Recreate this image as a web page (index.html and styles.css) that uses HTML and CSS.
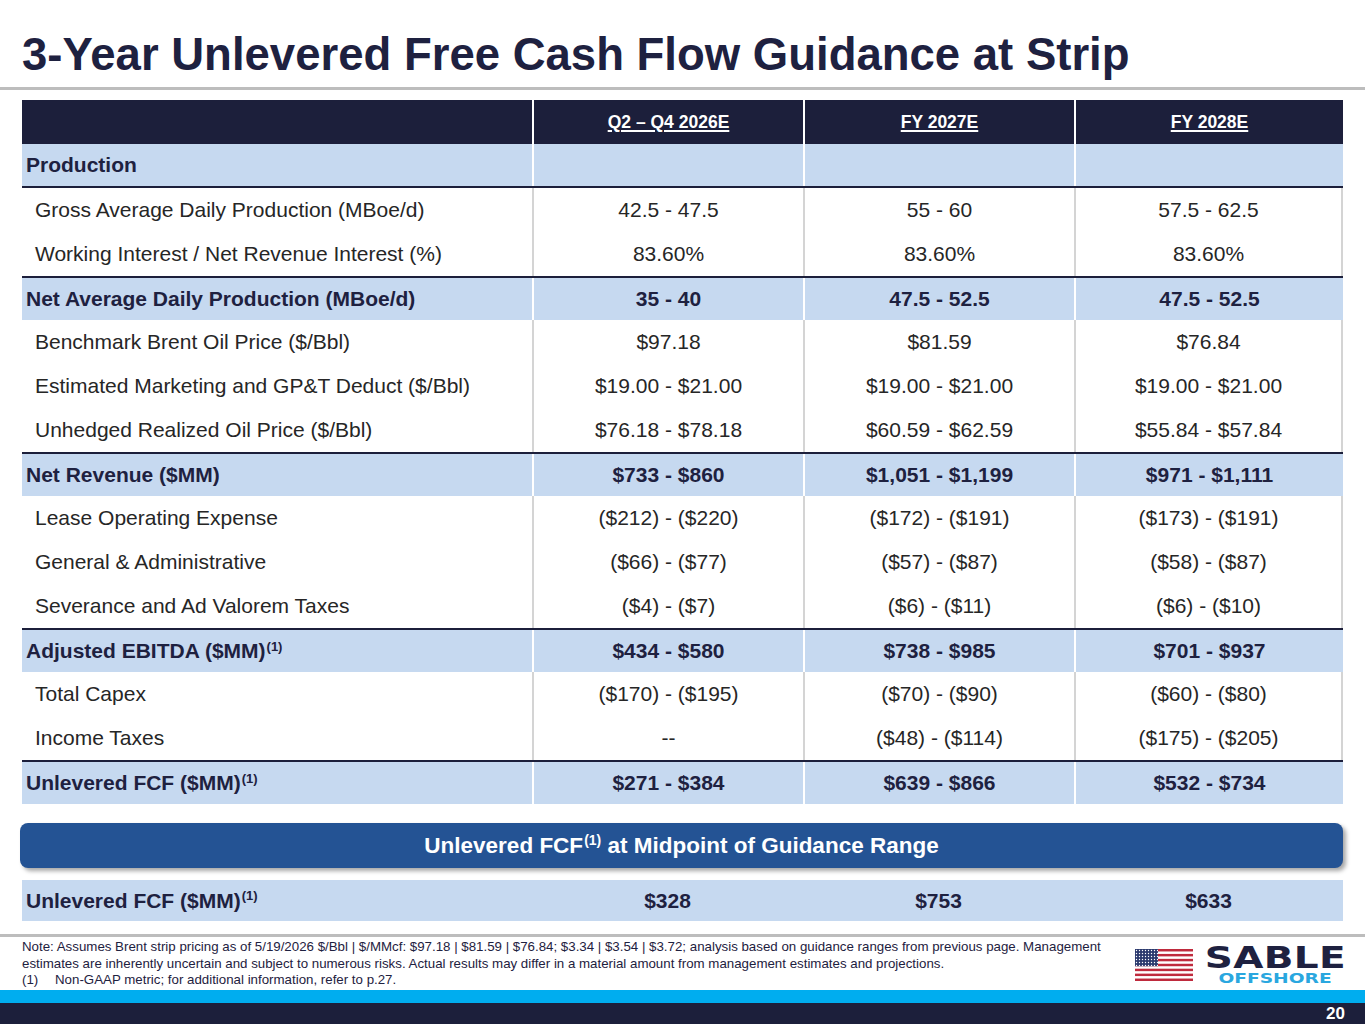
FILE: index.html
```html
<!DOCTYPE html>
<html lang="en">
<head>
<meta charset="utf-8">
<title>3-Year Unlevered Free Cash Flow Guidance at Strip</title>
<link rel="stylesheet" href="styles.css">
</head>
<body>
<div class="slide">
  <h1 class="title">3-Year Unlevered Free Cash Flow Guidance at Strip</h1>
  <div class="rule top-rule"></div>

  <div class="table">
    <div class="row head">
      <div class="cell label"></div>
      <div class="cell"><u>Q2 – Q4 2026E</u></div>
      <div class="cell"><u>FY 2027E</u></div>
      <div class="cell"><u>FY 2028E</u></div>
    </div>
    <div class="row blue bold endline">
      <div class="cell label">Production</div>
      <div class="cell"></div><div class="cell"></div><div class="cell"></div>
    </div>
    <div class="row white">
      <div class="cell label">Gross Average Daily Production (MBoe/d)</div>
      <div class="cell">42.5 - 47.5</div><div class="cell">55 - 60</div><div class="cell">57.5 - 62.5</div>
    </div>
    <div class="row white">
      <div class="cell label">Working Interest / Net Revenue Interest (%)</div>
      <div class="cell">83.60%</div><div class="cell">83.60%</div><div class="cell">83.60%</div>
    </div>
    <div class="row blue bold startline">
      <div class="cell label">Net Average Daily Production (MBoe/d)</div>
      <div class="cell">35 - 40</div><div class="cell">47.5 - 52.5</div><div class="cell">47.5 - 52.5</div>
    </div>
    <div class="row white">
      <div class="cell label">Benchmark Brent Oil Price ($/Bbl)</div>
      <div class="cell">$97.18</div><div class="cell">$81.59</div><div class="cell">$76.84</div>
    </div>
    <div class="row white">
      <div class="cell label">Estimated Marketing and GP&amp;T Deduct ($/Bbl)</div>
      <div class="cell">$19.00 - $21.00</div><div class="cell">$19.00 - $21.00</div><div class="cell">$19.00 - $21.00</div>
    </div>
    <div class="row white">
      <div class="cell label">Unhedged Realized Oil Price ($/Bbl)</div>
      <div class="cell">$76.18 - $78.18</div><div class="cell">$60.59 - $62.59</div><div class="cell">$55.84 - $57.84</div>
    </div>
    <div class="row blue bold startline">
      <div class="cell label">Net Revenue ($MM)</div>
      <div class="cell">$733 - $860</div><div class="cell">$1,051 - $1,199</div><div class="cell">$971 - $1,111</div>
    </div>
    <div class="row white">
      <div class="cell label">Lease Operating Expense</div>
      <div class="cell">($212) - ($220)</div><div class="cell">($172) - ($191)</div><div class="cell">($173) - ($191)</div>
    </div>
    <div class="row white">
      <div class="cell label">General &amp; Administrative</div>
      <div class="cell">($66) - ($77)</div><div class="cell">($57) - ($87)</div><div class="cell">($58) - ($87)</div>
    </div>
    <div class="row white">
      <div class="cell label">Severance and Ad Valorem Taxes</div>
      <div class="cell">($4) - ($7)</div><div class="cell">($6) - ($11)</div><div class="cell">($6) - ($10)</div>
    </div>
    <div class="row blue bold startline">
      <div class="cell label"><span>Adjusted EBITDA ($MM)<sup>(1)</sup></span></div>
      <div class="cell">$434 - $580</div><div class="cell">$738 - $985</div><div class="cell">$701 - $937</div>
    </div>
    <div class="row white">
      <div class="cell label">Total Capex</div>
      <div class="cell">($170) - ($195)</div><div class="cell">($70) - ($90)</div><div class="cell">($60) - ($80)</div>
    </div>
    <div class="row white">
      <div class="cell label">Income Taxes</div>
      <div class="cell">--</div><div class="cell">($48) - ($114)</div><div class="cell">($175) - ($205)</div>
    </div>
    <div class="row blue bold startline">
      <div class="cell label"><span>Unlevered FCF ($MM)<sup>(1)</sup></span></div>
      <div class="cell">$271 - $384</div><div class="cell">$639 - $866</div><div class="cell">$532 - $734</div>
    </div>
  </div>

  <div class="banner"><span>Unlevered FCF<sup>(1)</sup> at Midpoint of Guidance Range</span></div>

  <div class="row mid bold">
    <div class="cell label"><span>Unlevered FCF ($MM)<sup>(1)</sup></span></div>
    <div class="cell">$328</div><div class="cell">$753</div><div class="cell">$633</div>
  </div>

  <div class="rule bottom-rule"></div>

  <div class="footer">
    <div class="notes">
      <p>Note: Assumes Brent strip pricing as of 5/19/2026 $/Bbl | $/MMcf: $97.18 | $81.59 | $76.84; $3.34 | $3.54 | $3.72; analysis based on guidance ranges from previous page. Management estimates are inherently uncertain and subject to numerous risks. Actual results may differ in a material amount from management estimates and projections.</p>
      <p class="fn"><span class="fn-num">(1)</span><span>Non-GAAP metric; for additional information, refer to p.27.</span></p>
    </div>
    <div class="logo">
      <svg class="flag" width="58" height="32" viewBox="0 0 58 32" aria-hidden="true">
        <defs>
          <pattern id="stars" x="0" y="0" width="3" height="3" patternUnits="userSpaceOnUse">
            <circle cx="1.5" cy="1.5" r="0.7" fill="#ffffff"/>
          </pattern>
        </defs>
        <rect width="58" height="32" fill="#ffffff"/>
        <rect y="0" width="58" height="2.46" fill="#bf2a3d"/>
        <rect y="4.92" width="58" height="2.46" fill="#bf2a3d"/>
        <rect y="9.85" width="58" height="2.46" fill="#bf2a3d"/>
        <rect y="14.77" width="58" height="2.46" fill="#bf2a3d"/>
        <rect y="19.69" width="58" height="2.46" fill="#bf2a3d"/>
        <rect y="24.62" width="58" height="2.46" fill="#bf2a3d"/>
        <rect y="29.54" width="58" height="2.46" fill="#bf2a3d"/>
        <rect x="0" y="0" width="23" height="17.2" fill="#2c3a6e"/>
        <rect x="0" y="0" width="23" height="17.2" fill="url(#stars)"/>
      </svg>
      <div class="wordmark">
        <span class="sable">SABLE</span>
        <span class="offshore">OFFSHORE</span>
      </div>
    </div>
  </div>

  <div class="bar-cyan"></div>
  <div class="bar-navy"><span class="page">20</span></div>
</div>
</body>
</html>
```

FILE: styles.css
```css
html, body {
  margin: 0;
  padding: 0;
  background: #ffffff;
}

.slide {
  width: 1365px;
  height: 1024px;
  overflow: hidden;
  font-family: "Liberation Sans", Arial, sans-serif;
  color: #262626;
  display: flex;
  flex-direction: column;
}

.title {
  margin: 0 0 6px 0;
  padding: 29px 0 0 22px;
  font-size: 45.5px;
  line-height: 52px;
  font-weight: 700;
  color: #1e2140;
  white-space: nowrap;
}

.rule {
  height: 3px;
  background: #bdbdbd;
  width: 100%;
}

.table {
  margin: 10px 0 0 22px;
  width: 1321px;
}

.row {
  display: grid;
  grid-template-columns: 510px 271px 271px 269px;
  height: 44px;
  box-sizing: border-box;
  font-size: 21px;
}

.cell {
  display: flex;
  align-items: center;
  justify-content: center;
  white-space: nowrap;
  box-sizing: border-box;
}

.cell.label {
  justify-content: flex-start;
  padding-left: 13px;
}

.bold {
  font-weight: 700;
  color: #1e2140;
}

.bold .cell.label {
  padding-left: 4px;
}

.head {
  background: #1c1f3b;
  color: #ffffff;
  font-weight: 700;
  font-size: 17.5px;
}

.head .cell + .cell {
  border-left: 2px solid #ffffff;
}

.head u {
  text-decoration-thickness: 1.5px;
  text-underline-offset: 2px;
}

.blue {
  background: #c6d9f0;
}

.blue .cell + .cell {
  border-left: 2px solid #ffffff;
}

.white .cell + .cell {
  border-left: 2px solid #d4d4d4;
}

.white .cell:last-child {
  border-right: 2px solid #d4d4d4;
}

.endline {
  border-bottom: 2px solid #1c1f3b;
}

.startline {
  border-top: 2px solid #1c1f3b;
}

sup {
  font-size: 0.62em;
  line-height: 0;
  vertical-align: 0.55em;
  margin-left: 1px;
}

.banner {
  margin: 19px 0 0 20px;
  width: 1323px;
  height: 45px;
  box-sizing: border-box;
  background: #245394;
  border-radius: 8px;
  box-shadow: 3px 3px 4px rgba(0, 0, 0, 0.35);
  color: #ffffff;
  font-weight: 700;
  font-size: 22.5px;
  display: flex;
  align-items: center;
  justify-content: center;
}

.mid {
  margin: 12px 0 0 22px;
  width: 1321px;
  height: 41px;
  background: #c6d9f0;
}

.bottom-rule {
  margin-top: 13px;
}

.footer {
  height: 53px;
  display: flex;
  justify-content: space-between;
  align-items: flex-start;
  padding: 2px 20px 0 22px;
  box-sizing: border-box;
}

.notes {
  width: 1090px;
  font-size: 13.3px;
  line-height: 16.5px;
  color: #1e2140;
}

.notes p {
  margin: 0;
}

.fn {
  display: flex;
}

.fn-num {
  width: 33px;
}

.logo {
  display: flex;
  align-items: center;
  gap: 12px;
  padding-top: 6px;
}

.flag {
  display: block;
}

.wordmark {
  display: flex;
  flex-direction: column;
  align-items: center;
  width: 140px;
}

.sable {
  display: block;
  font-family: "DejaVu Sans", sans-serif;
  font-weight: 900;
  font-size: 30px;
  line-height: 26px;
  height: 26px;
  color: #1e2140;
  transform: scaleX(1.3);
  letter-spacing: 0.3px;
}

.offshore {
  display: block;
  font-family: "DejaVu Sans", sans-serif;
  font-weight: 700;
  font-size: 13.5px;
  line-height: 14px;
  color: #2aa7df;
  transform: scaleX(1.38);
}

.bar-cyan {
  height: 13px;
  background: #00adef;
}

.bar-navy {
  height: 21px;
  background: #1c1f3b;
  display: flex;
  justify-content: flex-end;
  align-items: center;
  padding-right: 20px;
}

.page {
  color: #ffffff;
  font-weight: 700;
  font-size: 17px;
}
```
